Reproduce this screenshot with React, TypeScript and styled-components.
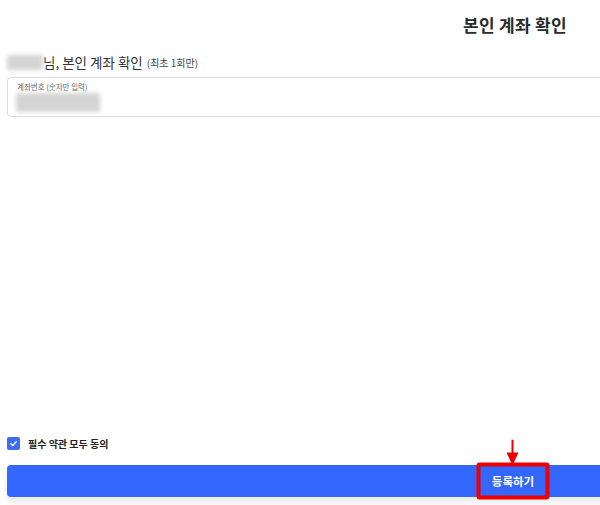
import { createGlobalStyle, styled } from 'styled-components';

const GlobalStyle = createGlobalStyle`
  html, body {
    margin: 0;
    padding: 0;
    background: #fff;
    overflow: hidden;
  }
  body {
    font-family: 'Noto Sans CJK KR', 'Noto Sans', sans-serif;
    color: #333;
  }
`;

// the captured page is wider than the window; it is cut off on the right
const PAGE_WIDTH = 1026;

const Frame = styled.div`
  width: 100vw;
  height: 505px;
  overflow: hidden;
`;

const Page = styled.div`
  width: ${PAGE_WIDTH}px;
  height: 505px;
  display: flex;
  flex-direction: column;
  padding: 0 7px;
  box-sizing: border-box;
`;

const Title = styled.h1`
  margin: 12px 0 0;
  font-size: 17px;
  font-weight: 700;
  line-height: 26px;
  text-align: center;
  color: #2b2b2b;
  letter-spacing: 0.3px;
  padding-left: 4px;
`;

const Greeting = styled.div`
  display: flex;
  align-items: center;
  margin-top: 15px;
  height: 18px;
  font-size: 13.5px;
  color: #333;
`;

const Blurred = styled.span<{ $w: number; $h: number }>`
  display: inline-block;
  width: ${(p) => p.$w}px;
  height: ${(p) => p.$h}px;
  background: #d4d4d4;
  filter: blur(2px);
  border-radius: 2px;
`;

const Small = styled.span`
  font-size: 10px;
  margin-left: 4px;
  color: #444;
`;

const InputBox = styled.div`
  margin-top: 6px;
  height: 40px;
  box-sizing: border-box;
  border: 1px solid #dcdcdc;
  border-radius: 4px;
  padding: 4px 9px 0;
  display: flex;
  flex-direction: column;
  gap: 1px;
`;

const InputLabel = styled.div`
  font-size: 7.5px;
  line-height: 10px;
  color: #666;
`;

const Spacer = styled.div`
  flex: 1;
`;

const AgreeRow = styled.label`
  display: flex;
  align-items: center;
  gap: 8px;
  height: 14px;
  font-size: 10px;
  font-weight: 700;
  color: #222;
`;

const Check = styled.span`
  width: 13px;
  height: 13px;
  border-radius: 2px;
  background: #3d6df2;
  display: flex;
  align-items: center;
  justify-content: center;
`;

const SubmitButton = styled.button`
  margin-top: 15px;
  height: 32px;
  width: 100%;
  border: none;
  border-radius: 4px;
  background: #3367fd;
  color: #fff;
  font-family: inherit;
  font-size: 11.5px;
  font-weight: 700;
  line-height: 16px;
  display: flex;
  align-items: center;
  justify-content: center;
  box-shadow: 0 6px 6px rgba(0, 0, 0, 0.08);
`;

const Highlighted = styled.span`
  position: relative;
  display: inline-block;
  line-height: 16px;
`;

const RedBox = styled.span`
  position: absolute;
  left: 50%;
  top: 50%;
  width: 73px;
  height: 37px;
  transform: translate(-50%, -50%);
  box-sizing: border-box;
  border: 4px solid #ee0000;
  border-radius: 3px;
`;

const Arrow = styled.svg`
  position: absolute;
  left: 50%;
  bottom: 100%;
  margin-left: -6px;
  margin-bottom: 1px;
`;

const Footer = styled.div`
  height: 8px;
`;

export default function App() {
  return (
    <Frame>
      <GlobalStyle />
      <Page>
        <Title>본인 계좌 확인</Title>
        <Greeting>
          <Blurred $w={36} $h={15} />
          님, 본인 계좌 확인<Small>(최초 1회만)</Small>
        </Greeting>
        <InputBox>
          <InputLabel>계좌번호 (숫자만 입력)</InputLabel>
          <Blurred $w={84} $h={19} style={{ marginLeft: -1 }} />
        </InputBox>
        <Spacer />
        <AgreeRow>
          <Check>
            <svg width="9" height="9" viewBox="0 0 10 10">
              <path d="M2 5.2 L4.2 7.2 L8 3" stroke="#fff" strokeWidth="1.5" fill="none" strokeLinecap="round" />
            </svg>
          </Check>
          필수 약관 모두 동의
        </AgreeRow>
        <SubmitButton type="button">
          <Highlighted>
            등록하기
            <RedBox>
              <Arrow width="12" height="26" viewBox="0 0 12 26">
                <line x1="6" y1="0" x2="6" y2="16" stroke="#ee0000" strokeWidth="2" />
                <polygon points="0,13 12,13 6,26" fill="#ee0000" />
              </Arrow>
            </RedBox>
          </Highlighted>
        </SubmitButton>
        <Footer />
      </Page>
    </Frame>
  );
}
